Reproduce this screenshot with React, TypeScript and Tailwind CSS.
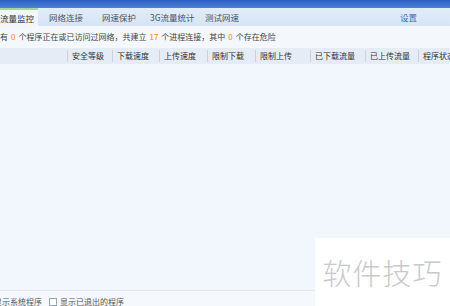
import React from "react";

const font = { fontFamily: '"Noto Sans CJK SC", "Noto Sans", sans-serif' };

const cols: { label: string; w: number }[] = [
  { label: "", w: 67 },
  { label: "安全等级", w: 45 },
  { label: "下载速度", w: 47 },
  { label: "上传速度", w: 48 },
  { label: "限制下载", w: 48 },
  { label: "限制上传", w: 55 },
  { label: "已下载流量", w: 55 },
  { label: "已上传流量", w: 53 },
  { label: "程序状态", w: 60 },
];

export default function App() {
  return (
    <div className="w-[450px] h-[306px] overflow-hidden flex flex-col bg-[#f3f6fc] text-[#444]" style={font}>
      <div className="h-[8px] shrink-0 bg-gradient-to-b from-[#2e5fc4] to-[#4a80d6]" />
      <div className="h-[18px] shrink-0 flex items-stretch bg-gradient-to-b from-[#e3edf9] to-[#d6e4f5] text-[8.5px] leading-none">
        <div className="w-[38px] flex items-center bg-[#f3f7fc] border-t-2 border-[#a6d69a] text-[#333]">
          <span className="whitespace-nowrap">流量监控</span>
        </div>
        <div className="w-[11px]" />
        <div className="w-[53px] flex items-center text-[#555] whitespace-nowrap">网络连接</div>
        <div className="w-[48px] flex items-center text-[#555] whitespace-nowrap">网速保护</div>
        <div className="w-[55px] flex items-center text-[#555] whitespace-nowrap">3G流量统计</div>
        <div className="w-[50px] flex items-center text-[#555] whitespace-nowrap">测试网速</div>
        <div className="flex-1" />
        <div className="w-[50px] flex items-center text-[#3b6fc2] whitespace-nowrap">设置</div>
      </div>
      <div className="h-[22px] shrink-0 flex items-center bg-[#f4f7fc] text-[8px] leading-none whitespace-nowrap text-[#444]">
        有 <span className="text-[#f08a16] mx-[3px]">0</span> 个程序正在或已访问过网络，共建立 <span className="text-[#f08a16] mx-[3px]">17</span> 个进程连接，其中 <span className="text-[#f08a16] mx-[3px]">0</span> 个存在危险
      </div>
      <div className="h-[16px] shrink-0 flex items-center bg-[#e6ecf5] text-[8px] leading-none text-[#333]">
        {cols.map((c, i) => (
          <div
            key={i}
            className={`shrink-0 h-[12px] flex items-center pl-[4px] whitespace-nowrap ${i > 0 ? "border-l border-[#c9d3e1]" : ""}`}
            style={{ width: c.w }}
          >
            {c.label}
          </div>
        ))}
      </div>
      <div className="flex-1 bg-[#f2f6fd]" />
      <div className="h-[1px] shrink-0 bg-[#e1e7f0]" />
      <div className="h-[15px] shrink-0 relative bg-[#f5f8fc] text-[8px] leading-none">
        <div className="flex items-start pt-[7px] -ml-[6px] whitespace-nowrap text-[#555]">
          <span>显示系统程序</span>
          <span className="ml-[7px] w-[8px] h-[8px] border border-[#9aa6b5] bg-white inline-block" />
          <span className="ml-[3px]">显示已退出的程序</span>
        </div>
        <div className="absolute left-[315px] bottom-0 w-[135px] h-[68px] bg-white flex items-center justify-center">
          <span className="text-[29px] leading-none text-[#c9c9c9] font-light tracking-[1px]">软件技巧</span>
        </div>
      </div>
    </div>
  );
}
